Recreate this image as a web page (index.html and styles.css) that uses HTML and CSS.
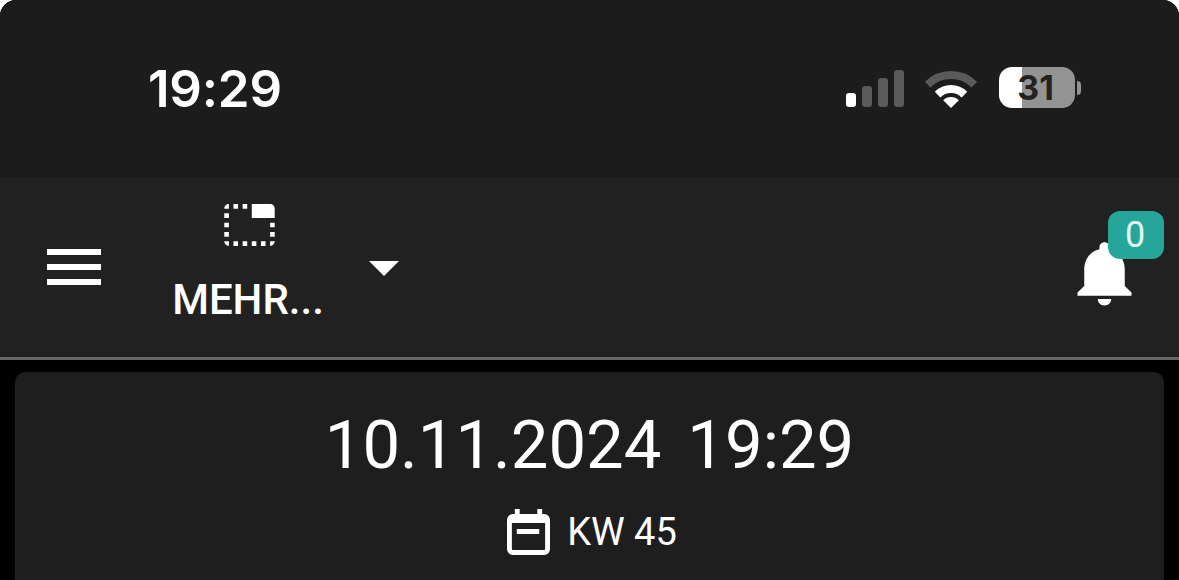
FILE: index.html
```html
<!DOCTYPE html>
<html>
<head>
  <title>Dashboard</title>
  <link rel="stylesheet" href="styles.css">
</head>
<body>
  <div class="screen">
    <div class="status-bar">
      <span class="clock">19:29</span>
      <div class="status-icons">
        <div class="signal">
          <span class="bar bar-1"></span>
          <span class="bar bar-2"></span>
          <span class="bar bar-3"></span>
          <span class="bar bar-4"></span>
        </div>
        <svg class="wifi" width="52" height="38" viewBox="0 0 52 38">
          <path d="M2.7 14.7A33 33 0 0 1 49.3 14.7" fill="none" stroke="#5a5a5a" stroke-width="8"/>
          <path d="M12.6 24.6A19 19 0 0 1 39.4 24.6" fill="none" stroke="#fff" stroke-width="8"/>
          <path d="M26 38L18.2 30.2A11 11 0 0 1 33.8 30.2Z" fill="#fff"/>
        </svg>
        <div class="battery">
          <div class="battery-body"><span class="battery-level">31</span></div>
          <span class="battery-cap"></span>
        </div>
      </div>
    </div>

    <nav class="toolbar">
      <button class="icon-btn menu-btn">
        <svg width="72" height="72" viewBox="0 0 24 24"><path d="M3 18h18v-2H3v2zm0-5h18v-2H3v2zm0-7v2h18V6H3z"/></svg>
      </button>
      <div class="tab">
        <svg class="tab-icon" width="55" height="56" viewBox="0 0 24 24" preserveAspectRatio="none"><path d="M1 9h2V7H1v2zm0 4h2v-2H1v2zm0-8h2V3c-1.1 0-2 .9-2 2zm8 16h2v-2H9v2zm-8-4h2v-2H1v2zm2 4v-2H1c0 1.1.9 2 2 2zM21 3h-8v6h10V5c0-1.1-.9-2-2-2zm0 14h2v-2h-2v2zM9 5h2V3H9v2zM5 21h2v-2H5v2zM5 5h2V3H5v2zm16 16c1.1 0 2-.9 2-2h-2v2zm0-8h2v-2h-2v2zm-8 8h2v-2h-2v2zm4 0h2v-2h-2v2z"/></svg>
        <span class="tab-label">MEHR...</span>
      </div>
      <svg class="arrow" width="72" height="72" viewBox="0 0 24 24"><path d="M7 10l5 5 5-5z"/></svg>
      <div class="bell">
        <svg width="81" height="78" viewBox="0 0 24 24" preserveAspectRatio="none"><path d="M12 22c1.1 0 2-.9 2-2h-4c0 1.1.89 2 2 2zm6-6v-5c0-3.07-1.64-5.64-4.5-6.32V4c0-.83-.67-1.5-1.5-1.5s-1.5.67-1.5 1.5v.68C7.63 5.36 6 7.92 6 11v5l-2 2v1h16v-1l-2-2z"/></svg>
        <span class="badge">0</span>
      </div>
    </nav>

    <main class="content">
      <div class="card">
        <div class="date"><span>10.11.2024</span><span>19:29</span></div>
        <div class="week">
          <svg width="43" height="46" viewBox="0 0 44 46" preserveAspectRatio="none">
            <path d="M8 0h5v5h18V0h5v5h2a6 6 0 0 1 6 6v29a6 6 0 0 1-6 6H6a6 6 0 0 1-6-6V11a6 6 0 0 1 6-6h2zM5 14v26a1 1 0 0 0 1 1h32a1 1 0 0 0 1-1V14z" fill="#fff"/>
            <rect x="10" y="20" width="23" height="5" fill="#fff"/>
          </svg>
          <span>KW 45</span>
        </div>
      </div>
    </main>
  </div>
</body>
</html>
```

FILE: styles.css
```css
html {
  background: #fff;
}

body {
  margin: 0;
  font-family: Roboto, 'Liberation Sans', sans-serif;
  color: #fff;
  height: 580px;
  overflow: hidden;
}

.screen {
  height: 580px;
  background: #000;
  border-radius: 16px 16px 0 0;
  overflow: hidden;
}

.status-bar {
  height: 177px;
  background: #1c1c1c;
  display: flex;
  align-items: center;
  justify-content: space-between;
  padding: 0 98px 0 148px;
}

.clock {
  font-family: Inter, sans-serif;
  font-weight: 600;
  font-size: 51px;
  letter-spacing: -0.2px;
}

.status-icons {
  display: flex;
  align-items: center;
  gap: 22px;
}

.signal {
  display: flex;
  align-items: flex-end;
  gap: 6px;
  height: 37px;
  margin-left: 1px;
  margin-right: -1px;
}

.bar {
  width: 10px;
  border-radius: 3px;
  background: #5a5a5a;
}

.bar-1 { height: 14px; background: #fff; }
.bar-2 { height: 21px; }
.bar-3 { height: 29px; }
.bar-4 { height: 37px; }

.battery {
  display: flex;
  align-items: center;
  gap: 2px;
  margin-top: -2px;
}

.battery-body {
  width: 76px;
  height: 41px;
  border-radius: 13px;
  background: linear-gradient(90deg, #fff 0, #fff 23px, #939393 23px);
  display: flex;
  align-items: center;
  justify-content: center;
}

.battery-level {
  font-family: Inter, sans-serif;
  font-weight: 700;
  font-size: 34px;
  color: #222;
  margin-left: -3px;
}

.battery-cap {
  width: 4px;
  height: 14px;
  background: #939393;
  border-radius: 0 4px 4px 0;
}

.toolbar {
  height: 180px;
  background: #212121;
  border-bottom: 3px solid #666;
  display: flex;
  align-items: flex-start;
  padding-left: 38px;
  position: relative;
}

.toolbar svg {
  fill: #fff;
  display: block;
}

.icon-btn {
  background: none;
  border: none;
  padding: 0;
  margin-top: 54px;
}

.tab {
  display: flex;
  flex-direction: column;
  align-items: center;
  margin-left: 63px;
  padding-top: 20px;
  width: 150px;
}

.tab-icon {
  margin-left: 2px;
}

.tab-label {
  font-size: 42px;
  font-weight: 500;
  line-height: 48px;
  margin-top: 23px;
}

.arrow {
  margin-top: 54px;
  margin-left: 25px;
}

.bell {
  position: absolute;
  top: 57px;
  left: 1064px;
  width: 81px;
  height: 78px;
}

.badge {
  position: absolute;
  top: -23px;
  left: 44px;
  width: 54px;
  height: 48px;
  padding-right: 2px;
  border-radius: 12px;
  background: #26a69a;
  color: #e0f5f2;
  font-size: 36px;
  line-height: 48px;
  text-align: center;
}

.content {
  padding: 12px 15px 0;
}

.card {
  background: #1e1e1e;
  border-radius: 10px;
  height: 300px;
  padding-top: 31px;
  box-sizing: border-box;
  text-align: center;
}

.date {
  font-size: 67px;
  line-height: 84px;
  display: flex;
  justify-content: center;
  gap: 26px;
}

.week {
  display: flex;
  align-items: center;
  justify-content: center;
  gap: 17px;
  margin-top: 22px;
  padding-left: 5px;
  font-size: 38px;
}
```
